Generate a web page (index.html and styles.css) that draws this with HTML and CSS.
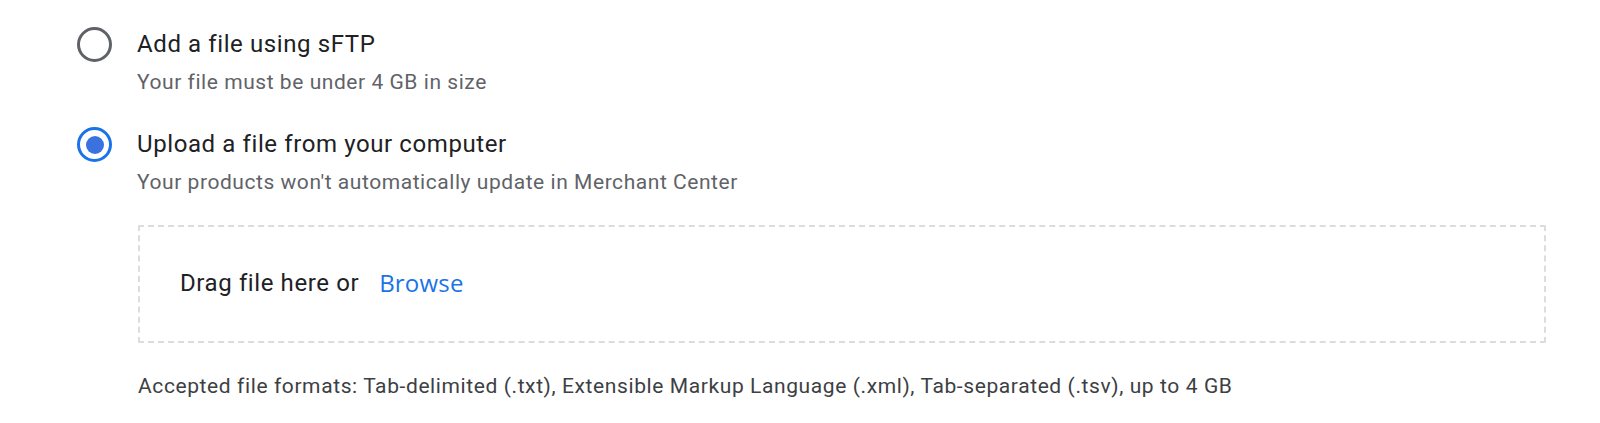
FILE: index.html
```html
<!DOCTYPE html>
<html lang="en">
  <head>
    <meta charset="UTF-8" />
    <meta name="viewport" content="width=device-width, initial-scale=1.0" />
    <title>Upload feed file</title>
    <link rel="stylesheet" href="styles.css">
  </head>
  <body>
    <div class="options">
      <label class="option">
        <span class="radio"></span>
        <span class="option-text">
          <span class="option-title">Add a file using sFTP</span>
          <span class="option-sub">Your file must be under 4 GB in size</span>
        </span>
      </label>
      <label class="option">
        <span class="radio checked"></span>
        <span class="option-text">
          <span class="option-title">Upload a file from your computer</span>
          <span class="option-sub">Your products won't automatically update in Merchant Center</span>
        </span>
      </label>

      <div class="upload">
        <div class="dropzone">
          <span class="drag">Drag file here or</span>
          <a class="browse" href="#">Browse</a>
        </div>
        <div class="formats">
          Accepted file formats: Tab-delimited (.txt), Extensible Markup Language (.xml), Tab-separated (.tsv), up to 4 GB
        </div>
      </div>
    </div>
  </body>
</html>
```

FILE: styles.css
```css
body {
  margin: 0;
  background: #fff;
  font-family: Roboto, "Liberation Sans", sans-serif;
  color: #202124;
}

.options {
  padding: 28px 54px 0 77px;
}

.option {
  display: flex;
  gap: 25px;
  margin-bottom: 32px;
}

.radio {
  flex: none;
  width: 35px;
  height: 35px;
  margin-top: -1px;
  border: 3px solid #5f6368;
  border-radius: 50%;
  box-sizing: border-box;
  display: flex;
  align-items: center;
  justify-content: center;
}
.radio.checked {
  border-color: #1a73e8;
}
.radio.checked::after {
  content: "";
  width: 18px;
  height: 18px;
  border-radius: 50%;
  background: #3a73e0;
}

.option-text {
  display: flex;
  flex-direction: column;
}
.option-title {
  font-size: 24px;
  line-height: 32px;
  letter-spacing: 0.6px;
}
.option-sub {
  margin-top: 8px;
  font-size: 21px;
  line-height: 28px;
  color: #5f6368;
  letter-spacing: 0.55px;
}

.upload {
  margin-left: 61px;
  margin-top: -3px;
}

.dropzone {
  height: 118px;
  box-sizing: border-box;
  border: 2px dashed #dadce0;
  border-radius: 2px;
  display: flex;
  align-items: center;
  padding-left: 40px;
  padding-bottom: 3px;
  gap: 20px;
}
.drag {
  font-size: 24px;
  line-height: 32px;
  letter-spacing: 0.6px;
}
.browse {
  font-family: "Open Sans", Roboto, sans-serif;
  font-size: 24px;
  line-height: 32px;
  font-weight: 500;
  letter-spacing: 0.2px;
  color: #1a73e8;
  text-decoration: none;
}

.formats {
  margin-top: 29px;
  font-size: 21px;
  line-height: 28px;
  letter-spacing: 0.6px;
  color: #3c4043;
}
```
